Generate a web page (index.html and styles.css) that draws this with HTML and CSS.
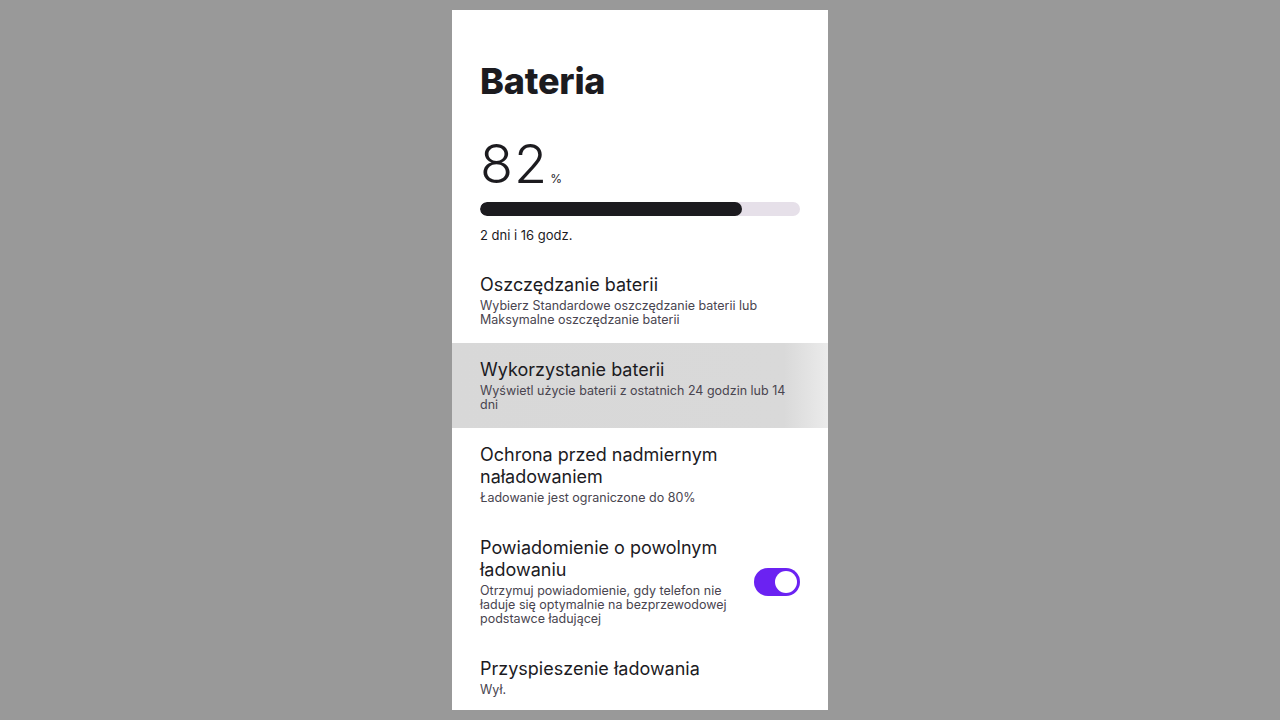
FILE: index.html
```html
<!DOCTYPE html>
<html lang="pl">
<head>
<meta charset="utf-8">
<title>Bateria</title>
<link rel="stylesheet" href="styles.css">
</head>
<body>
<main class="screen">
  <h1 class="title">Bateria</h1>
  <div class="level">
    <span class="level-num">82</span><span class="level-unit">%</span>
  </div>
  <div class="bar"><div class="bar-fill" style="width: 82%"></div></div>
  <p class="remaining">2 dni i 16 godz.</p>

  <ul class="list">
    <li class="item">
      <div class="item-text">
        <div class="item-title">Oszczędzanie baterii</div>
        <div class="item-sub">Wybierz Standardowe oszczędzanie baterii lub Maksymalne oszczędzanie baterii</div>
      </div>
    </li>
    <li class="item item-pressed">
      <div class="item-text">
        <div class="item-title">Wykorzystanie baterii</div>
        <div class="item-sub">Wyświetl użycie baterii z ostatnich 24 godzin lub 14 dni</div>
      </div>
    </li>
    <li class="item">
      <div class="item-text">
        <div class="item-title">Ochrona przed nadmiernym naładowaniem</div>
        <div class="item-sub">Ładowanie jest ograniczone do 80%</div>
      </div>
    </li>
    <li class="item">
      <div class="item-text narrow">
        <div class="item-title">Powiadomienie o powolnym ładowaniu</div>
        <div class="item-sub">Otrzymuj powiadomienie, gdy telefon nie ładuje się optymalnie na bezprzewodowej podstawce ładującej</div>
      </div>
      <div class="switch"><div class="switch-thumb"></div></div>
    </li>
    <li class="item">
      <div class="item-text">
        <div class="item-title">Przyspieszenie ładowania</div>
        <div class="item-sub">Wył.</div>
      </div>
    </li>
  </ul>
</main>
</body>
</html>
```

FILE: styles.css
```css
html, body {
  margin: 0;
  padding: 0;
}
body {
  background: #999999;
  font-family: Inter, "Noto Sans", sans-serif;
  color: #1c1b1f;
  display: flex;
  justify-content: center;
  padding-top: 10px;
  height: 720px;
  box-sizing: border-box;
  overflow: hidden;
}
.screen {
  width: 376px;
  height: 700px;
  background: #ffffff;
  overflow: hidden;
  box-sizing: border-box;
  padding-top: 51px;
}
.title {
  margin: 0 28px;
  font-size: 36px;
  font-weight: 800;
  line-height: 40px;
  letter-spacing: -0.2px;
}
.level {
  margin: 35px 28px 0;
  display: flex;
  align-items: baseline;
  height: 56px;
  line-height: 56px;
}
.level-num {
  font-size: 54px;
  font-weight: 300;
  letter-spacing: 1px;
}
.level-unit {
  font-size: 12px;
  margin-left: 2px;
  color: #1c1b1f;
}
.bar {
  margin: 10px 28px 0;
  height: 14px;
  border-radius: 7px;
  background: #e6e0e9;
  overflow: hidden;
}
.bar-fill {
  height: 100%;
  background: #1c1b1f;
  border-radius: 7px;
}
.remaining {
  margin: 10px 28px 0;
  font-size: 13px;
  line-height: 18px;
  color: #1c1b1f;
}
.list {
  list-style: none;
  margin: 14px 0 0;
  padding: 0;
}
.item {
  display: flex;
  align-items: center;
  padding: 16px 28px;
  gap: 12px;
}
.item-pressed {
  background: linear-gradient(to right, #d8d8d8 0, #d9d9d9 calc(100% - 44px), #ebebeb 100%);
}
.item-text {
  flex: 1;
  min-width: 0;
}
.item-text.narrow {
  flex: 0 0 262px;
}
.item-title {
  font-size: 18px;
  line-height: 22px;
  font-weight: 400;
  color: #1c1b1f;
}
.item-sub {
  margin-top: 3px;
  font-size: 12.5px;
  line-height: 14px;
  color: #49454f;
}
.switch {
  margin-left: auto;
  width: 46px;
  height: 28px;
  border-radius: 14px;
  background: #6b22f2;
  display: flex;
  align-items: center;
  justify-content: flex-end;
  padding: 0 3px;
  box-sizing: border-box;
  flex-shrink: 0;
}
.switch-thumb {
  width: 22px;
  height: 22px;
  border-radius: 50%;
  background: #ffffff;
}
```
